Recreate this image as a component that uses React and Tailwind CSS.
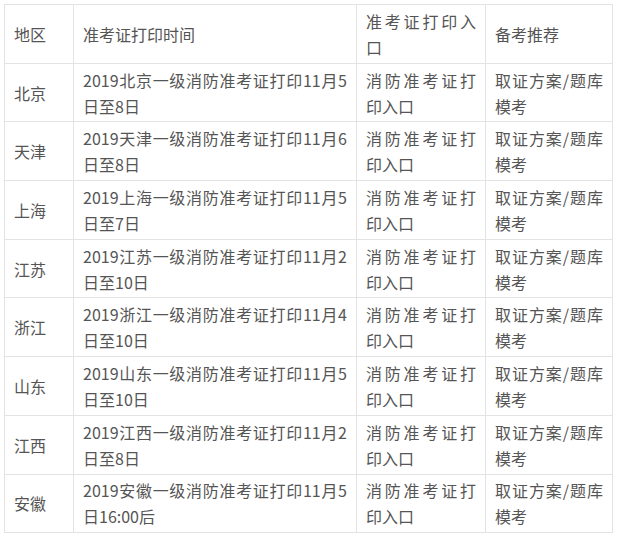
const rows = [
  ["北京", "2019北京一级消防准考证打印11月5日至8日"],
  ["天津", "2019天津一级消防准考证打印11月6日至8日"],
  ["上海", "2019上海一级消防准考证打印11月5日至7日"],
  ["江苏", "2019江苏一级消防准考证打印11月2日至10日"],
  ["浙江", "2019浙江一级消防准考证打印11月4日至10日"],
  ["山东", "2019山东一级消防准考证打印11月5日至10日"],
  ["江西", "2019江西一级消防准考证打印11月2日至8日"],
  ["安徽", "2019安徽一级消防准考证打印11月5日16:00后"],
];

const cell = "border border-[#e3e3e3] px-[9px] py-0 align-middle text-justify";

export default function App() {
  return (
    <div
      className="bg-white w-[620px] h-[536px] overflow-hidden pt-[4px] pl-[4px] text-[16px] leading-[26px] text-[#555]"
      style={{ fontFamily: '"Microsoft YaHei", "Noto Sans CJK SC", sans-serif' }}
    >
      <table className="table-fixed border-collapse w-[608px]">
        <colgroup>
          <col className="w-[69px]" />
          <col className="w-[283px]" />
          <col className="w-[129px]" />
          <col className="w-[127px]" />
        </colgroup>
        <tbody>
          <tr className="h-[58.7px]">
            <td className={cell}>地区</td>
            <td className={cell}>准考证打印时间</td>
            <td className={cell}>准考证打印入口</td>
            <td className={cell}>备考推荐</td>
          </tr>
          {rows.map(([area, time]) => (
            <tr key={area} className="h-[58.7px]">
              <td className={cell}>{area}</td>
              <td className={cell}>{time}</td>
              <td className={cell}>消防准考证打印入口</td>
              <td className={cell}>取证方案/题库模考</td>
            </tr>
          ))}
        </tbody>
      </table>
    </div>
  );
}
